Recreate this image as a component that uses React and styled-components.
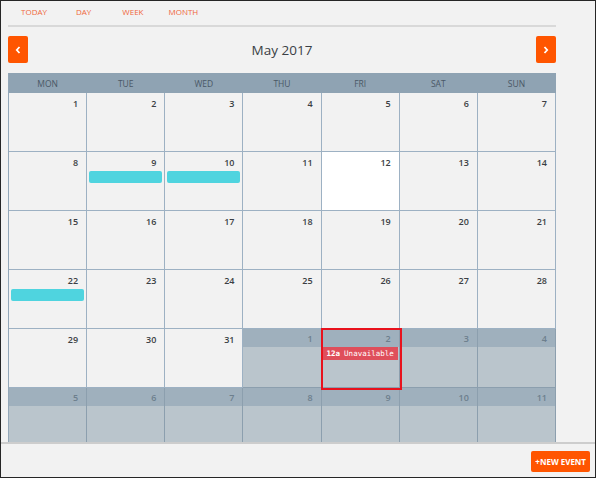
import * as React from 'react';
import styled, { createGlobalStyle } from 'styled-components';

const GlobalStyle = createGlobalStyle`
  body {
    margin: 0;
    font-family: 'Open Sans', 'Liberation Sans', sans-serif;
  }
`;

const tabs = ['TODAY', 'DAY', 'WEEK', 'MONTH'];
const tabGaps = [29, 31, 25, 0];
const weekdays = ['MON', 'TUE', 'WED', 'THU', 'FRI', 'SAT', 'SUN'];

const weeks = [
  [1, 2, 3, 4, 5, 6, 7].map((d) => ({ d })),
  [8, 9, 10, 11, 12, 13, 14].map((d) => ({ d })),
  [15, 16, 17, 18, 19, 20, 21].map((d) => ({ d })),
  [22, 23, 24, 25, 26, 27, 28].map((d) => ({ d })),
  [29, 30, 31].map((d) => ({ d })).concat([1, 2, 3, 4].map((d) => ({ d, other: true }))),
  [5, 6, 7, 8, 9, 10, 11].map((d) => ({ d, other: true })),
];

const bars = ['0-9', '0-10', '3-22'];

const Frame = styled.div`
  width: 596px;
  height: 478px;
  box-sizing: border-box;
  border: 1px solid #262626;
  background: #f2f2f2;
  display: flex;
  flex-direction: column;
`;

const Main = styled.div`
  flex: 1;
  overflow: hidden;
  padding: 0 39px 0 7px;
`;

const Tabs = styled.div`
  height: 19px;
  display: flex;
  align-items: flex-start;
  padding: 5px 0 0 13px;
  border-bottom: 2px solid #d9d9d9;
`;

const Tab = styled.div`
  font-size: 8px;
  color: #f0673c;
  margin-right: ${(p) => p.$gap}px;
`;

const Toolbar = styled.div`
  display: flex;
  align-items: center;
  justify-content: space-between;
  height: 27px;
  margin: 9px 0 10px;
`;

const NavButton = styled.div`
  width: 20px;
  height: 27px;
  background: #ff5500;
  border-radius: 2px;
  display: flex;
  align-items: center;
  justify-content: center;
`;

const Title = styled.div`
  font-size: 13.5px;
  color: #3a3f45;
`;

const Calendar = styled.div`
  border-left: 1px solid #93a7b8;
`;

const HeadRow = styled.div`
  display: grid;
  grid-template-columns: repeat(7, 1fr);
  height: 20px;
  background: #8fa3b3;
`;

const HeadCell = styled.div`
  font-size: 8.5px;
  color: #4a5866;
  display: flex;
  align-items: center;
  justify-content: center;
  border-right: 1px solid #8fa3b3;
`;

const Week = styled.div`
  display: grid;
  grid-template-columns: repeat(7, 1fr);
  height: 59px;
`;

const Cell = styled.div`
  position: relative;
  box-sizing: border-box;
  border-right: 1px solid ${(p) => (p.$other ? '#8c9fae' : '#9db1c3')};
  border-bottom: 1px solid ${(p) => (p.$other ? '#8c9fae' : '#9db1c3')};
  background: ${(p) => (p.$other ? '#bac5cc' : p.$today ? '#ffffff' : '#f2f2f2')};
  display: flex;
  flex-direction: column;
`;

const DayNumber = styled.div`
  height: 18px;
  display: flex;
  align-items: center;
  justify-content: flex-end;
  padding-right: 8px;
  font-size: 9px;
  font-weight: 600;
  color: ${(p) => (p.$other ? '#6d7f8d' : '#3b3f44')};
  background: ${(p) => (p.$other ? '#9fb0bd' : 'transparent')};
  margin-top: ${(p) => (p.$other ? '0' : '1px')};
`;

const Bar = styled.div`
  height: 12px;
  margin: 0 2px;
  background: #4fd4df;
  border-radius: 2px;
`;

const EventChip = styled.div`
  height: 13px;
  margin: 0 1px;
  background: #df4f5b;
  color: #ffffff;
  font-family: 'DejaVu Sans Mono', 'Liberation Mono', monospace;
  font-size: 7.5px;
  display: flex;
  align-items: center;
  padding-left: 4px;
  gap: 4px;
  & b {
    font-weight: 700;
  }
`;

const Highlight = styled.div`
  position: absolute;
  z-index: 2;
  top: -1px;
  left: -1px;
  right: -3px;
  bottom: -3px;
  border: 2px solid #e8121d;
  pointer-events: none;
`;

const Footer = styled.div`
  height: 33px;
  border-top: 2px solid #cdcdcd;
  display: flex;
  align-items: center;
  justify-content: flex-end;
  padding-right: 5px;
`;

const NewEvent = styled.div`
  height: 21px;
  padding: 0 4px;
  background: #ff5500;
  border-radius: 2px;
  color: #ffffff;
  font-size: 8px;
  font-weight: 700;
  display: flex;
  align-items: center;
  margin-top: 2px;
`;

const Chevron = ({ dir }) => (
  <svg width="6" height="8" viewBox="0 0 6 8">
    <path
      d={dir === 'left' ? 'M4.5 1 L1.8 4 L4.5 7' : 'M1.5 1 L4.2 4 L1.5 7'}
      stroke="#ffffff"
      strokeWidth="1.8"
      fill="none"
    />
  </svg>
);

export default function App() {
  return (
    <Frame>
      <GlobalStyle />
      <Main>
        <Tabs>
          {tabs.map((t, i) => (
            <Tab key={t} $gap={tabGaps[i]}>
              {t}
            </Tab>
          ))}
        </Tabs>
        <Toolbar>
          <NavButton>
            <Chevron dir="left" />
          </NavButton>
          <Title>May 2017</Title>
          <NavButton>
            <Chevron dir="right" />
          </NavButton>
        </Toolbar>
        <Calendar>
          <HeadRow>
            {weekdays.map((w) => (
              <HeadCell key={w}>{w}</HeadCell>
            ))}
          </HeadRow>
          {weeks.map((week, wi) => (
            <Week key={wi}>
              {week.map((day, di) => (
                <Cell key={di} $other={day.other} $today={!day.other && day.d === 12}>
                  <DayNumber $other={day.other}>{day.d}</DayNumber>
                  {!day.other && bars.includes(`${wi === 3 ? 3 : 0}-${day.d}`) && <Bar />}
                  {day.other && wi === 4 && day.d === 2 && (
                    <>
                      <EventChip>
                        <b>12a</b>
                        <span>Unavailable</span>
                      </EventChip>
                      <Highlight />
                    </>
                  )}
                </Cell>
              ))}
            </Week>
          ))}
        </Calendar>
      </Main>
      <Footer>
        <NewEvent>+NEW EVENT</NewEvent>
      </Footer>
    </Frame>
  );
}
